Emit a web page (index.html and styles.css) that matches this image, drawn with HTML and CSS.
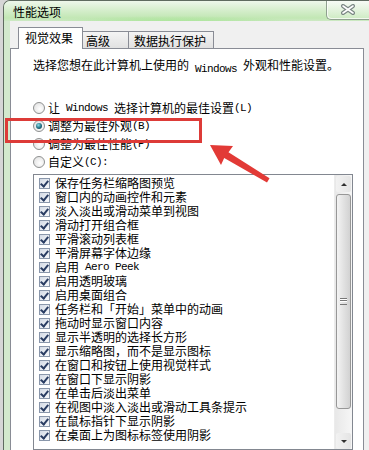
FILE: index.html
```html
<!DOCTYPE HTML>
<html>
    <head>
        <meta charset="UTF-8">
        <title>性能选项</title>
        <link rel="stylesheet" href="styles.css">
    </head>
    <body>
        <div class="window">
            <div class="titlebar">
                <span class="title">性能选项</span>
                <div class="close">
                    <svg width="16" height="11" viewBox="0 0 16 11">
                        <path d="M3 2 L13 9 M13 2 L3 9" stroke="#7b8784" stroke-width="4" stroke-linecap="round"/>
                        <path d="M3 2 L13 9 M13 2 L3 9" stroke="#fff" stroke-width="1.6" stroke-linecap="round"/>
                    </svg>
                </div>
            </div>
            <div class="frame">
                <div class="client">
                    <ul class="tabs">
                        <li class="tab on">视觉效果</li>
                        <li class="tab">高级</li>
                        <li class="tab">数据执行保护</li>
                    </ul>
                    <div class="panel">
                        <p class="intro">选择您想在此计算机上使用的<span class="en"> Windows </span>外观和性能设置。</p>
                        <ul class="radios">
                            <li><span class="radio"></span>让<span class="en"> Windows </span>选择计算机的最佳设置<span class="en">(L)</span></li>
                            <li><span class="radio on"></span>调整为最佳外观<span class="en">(B)</span></li>
                            <li><span class="radio"></span>调整为最佳性能<span class="en">(P)</span></li>
                            <li><span class="radio"></span>自定义<span class="en">(C):</span></li>
                        </ul>
                        <div class="listbox">
                            <ul class="checks">
                                <li><span class="cb"></span>保存任务栏缩略图预览</li>
                                <li><span class="cb"></span>窗口内的动画控件和元素</li>
                                <li><span class="cb"></span>淡入淡出或滑动菜单到视图</li>
                                <li><span class="cb"></span>滑动打开组合框</li>
                                <li><span class="cb"></span>平滑滚动列表框</li>
                                <li><span class="cb"></span>平滑屏幕字体边缘</li>
                                <li><span class="cb"></span>启用<span class="en"> Aero Peek</span></li>
                                <li><span class="cb"></span>启用透明玻璃</li>
                                <li><span class="cb"></span>启用桌面组合</li>
                                <li><span class="cb"></span>任务栏和「开始」菜单中的动画</li>
                                <li><span class="cb"></span>拖动时显示窗口内容</li>
                                <li><span class="cb"></span>显示半透明的选择长方形</li>
                                <li><span class="cb"></span>显示缩略图，而不是显示图标</li>
                                <li><span class="cb"></span>在窗口和按钮上使用视觉样式</li>
                                <li><span class="cb"></span>在窗口下显示阴影</li>
                                <li><span class="cb"></span>在单击后淡出菜单</li>
                                <li><span class="cb"></span>在视图中淡入淡出或滑动工具条提示</li>
                                <li><span class="cb"></span>在鼠标指针下显示阴影</li>
                                <li><span class="cb"></span>在桌面上为图标标签使用阴影</li>
                            </ul>
                            <div class="scrollbar">
                                <div class="sb-btn"><span class="tri up"></span></div>
                                <div class="sb-track">
                                    <div class="thumb"><span class="grip"></span></div>
                                </div>
                                <div class="sb-btn"><span class="tri down"></span></div>
                            </div>
                        </div>
                    </div>
                </div>
            </div>
        </div>

        <!-- 标注：红框和箭头 -->
        <div class="mark"></div>
        <svg class="arrow" width="75" height="45" viewBox="200 140 75 45">
            <polygon points="210,145 233,146 228.5,152.3 269.5,178.3 267,182.5 224.2,158.1 221,165" fill="#e23a36"/>
        </svg>
    </body>
</html>
```

FILE: styles.css
```css
body,p,ul,li{margin:0;padding:0;list-style:none;}
body{
    position:relative;
    width:369px;
    height:450px;
    overflow:hidden;
    background:#d6d6d6;
    font-family:"Noto Sans CJK SC",sans-serif;
    font-size:12px;
    line-height:14px;
    color:#000;
}
.en{
    font-family:"Liberation Mono",monospace;
    font-size:11px;
    letter-spacing:-0.6px;
    white-space:pre;
    vertical-align:-2px;
}
.window{
    display:flex;
    flex-direction:column;
    height:450px;
    margin-left:3px;
    border-left:1px solid #5f6b60;
    border-top:1px solid #5f6b60;
    border-top-left-radius:7px;
    background:#d3e9cd;
    overflow:hidden;
}
.titlebar{
    display:flex;
    align-items:center;
    height:29px;
    padding-left:9px;
    background:
        radial-gradient(ellipse 140px 8px at 170px 23px,rgba(150,226,128,.9),rgba(150,226,128,0)),
        linear-gradient(#eef7eb,#d6eecd 45%,#c2e7b4 85%,#cde9c4);
}
.titlebar .title{
    margin-top:1px;
}
.close{
    display:flex;
    align-items:center;
    justify-content:center;
    align-self:flex-start;
    margin-left:auto;
    width:42px;
    height:19px;
    margin-top:-1px;
    border:1px solid #8fa08f;
    border-top:none;
    border-right:none;
    border-bottom-left-radius:5px;
    background:linear-gradient(rgba(255,255,255,.55),rgba(225,242,220,.4));
    box-shadow:inset 1px -1px 0 rgba(255,255,255,.7);
}
.frame{
    display:flex;
    flex:1;
    padding-left:6px;
}
.client{
    display:flex;
    flex-direction:column;
    flex:1;
    padding:6px 5px 0 0;
    background:#f0f0f0;
}
.tabs{
    display:flex;
    align-items:flex-end;
    height:21px;
    padding-left:8px;
}
.tab{
    height:16px;
    line-height:17px;
    padding-left:3px;
    border:1px solid #898c95;
    border-bottom:none;
    border-left:none;
    background:linear-gradient(#f4f4f4,#e1e1e1);
}
.tab:nth-child(2){
    width:42px;
}
.tab:nth-child(3){
    width:79px;
    padding-left:5px;
}
.tab.on{
    position:relative;
    z-index:1;
    width:57px;
    height:21px;
    line-height:20px;
    margin-bottom:-1px;
    padding-left:6px;
    border-left:1px solid #898c95;
    background:#fff;
}
.panel{
    flex:1;
    padding:9px 0 0 22px;
    border:1px solid #898c95;
    background:#fff;
}
.radios{
    margin-top:23px;
}
.radios li{
    display:flex;
    align-items:center;
    height:18px;
}
.radio{
    position:relative;
    width:10px;
    height:10px;
    margin-right:3px;
    border:1px solid #8e9090;
    border-radius:50%;
    background:radial-gradient(circle at 60% 60%,#fff,#dcdcdc);
}
.radio.on::after{
    content:"";
    position:absolute;
    left:2px;
    top:2px;
    width:6px;
    height:6px;
    border-radius:50%;
    background:radial-gradient(circle at 40% 35%,#8fe0ea,#1f6c80 55%,#123a48);
}
.listbox{
    display:flex;
    width:318px;
    height:274px;
    margin-top:3px;
    border:1px solid #828790;
}
.checks{
    flex:1;
    padding:1px 0 0 5px;
    overflow:hidden;
}
.checks li{
    display:flex;
    align-items:center;
    height:14px;
    white-space:nowrap;
}
.cb{
    position:relative;
    flex:none;
    width:9px;
    height:9px;
    margin-right:5px;
    border:1px solid #8a97ab;
    background:linear-gradient(135deg,#d4dbe6,#f8f9fb);
}
.cb::after{
    content:"";
    position:absolute;
    left:2px;
    top:0;
    width:3px;
    height:6px;
    border:solid #2a3d63;
    border-width:0 2px 2px 0;
    transform:rotate(40deg);
}
.scrollbar{
    display:flex;
    flex-direction:column;
    width:17px;
    border-left:1px solid #ececec;
    background:linear-gradient(90deg,#e8e8e8,#f6f6f6);
}
.sb-btn{
    display:flex;
    align-items:center;
    justify-content:center;
    height:16px;
    margin:1px 1px 0;
    border-radius:2px;
    background:linear-gradient(90deg,#f2f2f2,#e4e4e4);
}
.tri{
    width:0;
    height:0;
    border-left:3px solid transparent;
    border-right:3px solid transparent;
}
.tri.up{
    border-bottom:3px solid #2f2f2f;
}
.tri.down{
    border-top:3px solid #2f2f2f;
}
.sb-track{
    flex:1;
    padding:2px 1px 0;
}
.thumb{
    display:flex;
    align-items:center;
    justify-content:center;
    height:213px;
    border:1px solid #979797;
    border-radius:3px;
    background:linear-gradient(90deg,#f4f4f4,#e2e2e2 50%,#d2d2d2);
}
.grip{
    width:7px;
    height:5px;
    border-top:1px solid #777;
    border-bottom:1px solid #777;
    background:linear-gradient(#fff 0 1px,#777 1px 2px,#fff 2px 3px,transparent 3px);
}
.mark{
    position:absolute;
    left:5px;
    top:118px;
    width:197px;
    height:25px;
    box-sizing:border-box;
    border:3px solid #dd3b38;
}
.arrow{
    position:absolute;
    left:200px;
    top:140px;
}
```
